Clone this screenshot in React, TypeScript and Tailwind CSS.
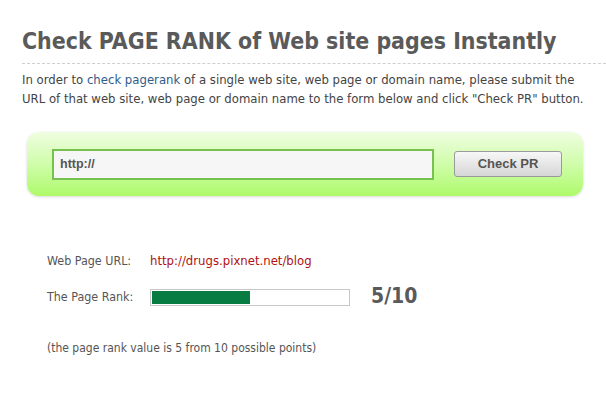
export default function App() {
  return (
    <div className="w-[606px] h-[400px] bg-white overflow-hidden" style={{ fontFamily: '"DejaVu Sans Condensed", "DejaVu Sans", sans-serif' }}>
      {/* Heading */}
      <div className="pl-[22px] pt-[24px]">
        <h1 className="text-[22.9px] leading-[34px] font-bold text-[#5a5a5a]">
          Check PAGE RANK of Web site pages Instantly
        </h1>
      </div>
      <div className="ml-[22px] mt-[5px] border-t border-dashed border-[#cfcfcf]" />

      <p className="pl-[22px] pt-[6px] text-[13px] leading-[19px] text-[#444] whitespace-nowrap">
        In order to <span className="text-[#2f5d8a]">check pagerank</span> of a single web site, web page or domain name, please submit the
        <br />
        URL of that web site, web page or domain name to the form below and click "Check PR" button.
      </p>

      {/* Form */}
      <div className="ml-[27px] mt-[24px] w-[556px] h-[64px] rounded-[12px] bg-gradient-to-b from-[#effde0] to-[#aefa68] shadow-[0_1px_3px_rgba(0,0,0,0.15)] flex items-center pl-[25px]">
        <div className="w-[382px] h-[31px] border-2 border-[#77c14f] bg-[#f6f6f6] flex items-center px-[6px]">
          <span className="text-[12.5px] font-bold text-[#555]" style={{ fontFamily: '"Liberation Sans", Arial, sans-serif' }}>http://</span>
        </div>
        <button
          className="ml-[20px] w-[108px] h-[26px] rounded-[3px] border border-[#9a9a9a] bg-gradient-to-b from-[#f7f7f7] to-[#d6d6d6] text-[13px] font-bold text-[#555]"
          style={{ fontFamily: '"Liberation Sans", Arial, sans-serif' }}
        >
          Check PR
        </button>
      </div>

      {/* Results */}
      <div className="pl-[47px] pt-[55px] text-[12px] text-[#555]">
        <div className="flex items-center h-[20px]">
          <span className="w-[103px] text-[12.4px]">Web Page URL:</span>
          <span className="text-[13px] text-[#b01010]">http://drugs.pixnet.net/blog</span>
        </div>
        <div className="flex items-center h-[20px] mt-[16px]">
          <span className="w-[103px] text-[12.4px]">The Page Rank:</span>
          <div className="w-[200px] h-[17px] border border-[#c8c8c8] bg-white p-px">
            <div className="h-full bg-[#067c43]" style={{ width: "50%" }} />
          </div>
          <span className="ml-[21px] text-[21px] font-bold text-[#5a5a5a]">5/10</span>
        </div>
        <div className="mt-[32px]">(the page rank value is 5 from 10 possible points)</div>
      </div>
    </div>
  );
}
